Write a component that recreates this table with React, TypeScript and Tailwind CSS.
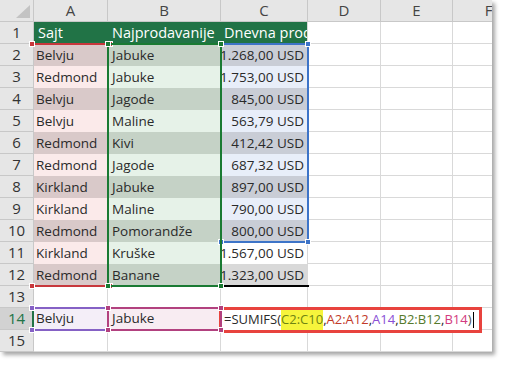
import React from "react";

const font = { fontFamily: '"Open Sans", "Noto Sans", sans-serif' };

const data = [
  ["Belvju", "Jabuke", "1.268,00 USD"],
  ["Redmond", "Jabuke", "1.753,00 USD"],
  ["Belvju", "Jagode", "845,00 USD"],
  ["Belvju", "Maline", "563,79 USD"],
  ["Redmond", "Kivi", "412,42 USD"],
  ["Redmond", "Jagode", "687,32 USD"],
  ["Kirkland", "Jabuke", "897,00 USD"],
  ["Kirkland", "Maline", "790,00 USD"],
  ["Redmond", "Pomorandže", "800,00 USD"],
  ["Kirkland", "Kruške", "1.567,00 USD"],
  ["Redmond", "Banane", "1.323,00 USD"],
];

function Handle({ pos, color }: { pos: string; color: string }) {
  return <span className={`absolute w-[6px] h-[6px] border border-white ${pos} ${color}`} />;
}

function Corners({ color }: { color: string }) {
  return (
    <>
      <Handle pos="-left-[4px] -top-[4px]" color={color} />
      <Handle pos="-right-[4px] -top-[4px]" color={color} />
      <Handle pos="-left-[4px] -bottom-[4px]" color={color} />
      <Handle pos="-right-[4px] -bottom-[4px]" color={color} />
    </>
  );
}

function cColor(i: number) {
  if (i === 9) return "bg-white";
  if (i === 10) return "bg-[#d9d9d9]";
  return i % 2 === 0 ? "bg-[#c9cdd6]" : "bg-[#e8eef9]";
}

const gridShape =
  "grid grid-cols-[34px_74px_113px_87px_73px_72px_72px] grid-rows-[repeat(16,22px)] w-[525px]";

export default function App() {
  const letters = ["A", "B", "C", "D", "E", "F"];
  const gridCell = "border-r border-b border-[#d9d9d9] bg-white";
  const rowHead = "bg-[#e6e6e6] border-r border-b border-[#c8c8c8] flex items-center justify-center text-[15px] text-[#333]";

  return (
    <div className="w-[506px] h-[368px] bg-white" style={font}>
      <div className="w-[492px] h-[352px] overflow-hidden shadow-[3px_3px_4px_rgba(0,0,0,0.35)]">
        <div className="relative w-[525px]">
          <div className={`${gridShape} text-[13.5px] text-[#2a2a2a]`}>
            {/* corner */}
            <div className="bg-[#e6e6e6] border-r border-b border-[#c8c8c8] relative">
              <svg className="absolute left-0 top-0" width="34" height="22">
                <polygon points="16,18 30,18 30,5" fill="#c3c3c3" />
              </svg>
            </div>
            {letters.map((l) => (
              <div
                key={l}
                className="bg-[#e6e6e6] border-r border-b border-[#c8c8c8] flex items-center justify-center text-[15px] text-[#444]"
              >
                {l}
              </div>
            ))}

            {/* row 1: table header */}
            <div className={rowHead}>1</div>
            <div className="bg-[#217346] text-white text-[14.5px] flex items-center pl-[4px]">Sajt</div>
            <div className="bg-[#217346] text-white text-[14.5px] flex items-center pl-[4px]">Najprodavanije</div>
            <div className="bg-[#217346] text-white text-[14.5px] flex items-center pl-[3px] overflow-hidden whitespace-nowrap border-r border-[#d9d9d9]">
              Dnevna prodaja
            </div>
            <div className={gridCell} />
            <div className={gridCell} />
            <div className={gridCell} />

            {/* data rows 2-12 */}
            {data.map((r, i) => (
              <React.Fragment key={i}>
                <div className={rowHead}>{i + 2}</div>
                <div className={`flex items-center pl-[2px] ${i % 2 === 0 ? "bg-[#d9c9c9]" : "bg-[#fbeaea]"}`}>{r[0]}</div>
                <div className={`flex items-center pl-[4px] ${i % 2 === 0 ? "bg-[#c5d2c6]" : "bg-[#e6f2e8]"}`}>{r[1]}</div>
                <div className={`flex items-center justify-end pr-[3px] border-r border-[#d9d9d9] whitespace-nowrap ${cColor(i)}`}>
                  {r[2]}
                </div>
                <div className={gridCell} />
                <div className={gridCell} />
                <div className={gridCell} />
              </React.Fragment>
            ))}

            {/* rows 13-15 */}
            {[13, 14, 15].map((n) => (
              <React.Fragment key={n}>
                <div
                  className={`border-r border-b border-[#c8c8c8] flex items-center justify-center text-[15px] ${
                    n === 14 ? "bg-[#d2d2d2] text-[#217346]" : "bg-[#e6e6e6] text-[#333]"
                  }`}
                >
                  {n}
                </div>
                {n === 14 ? (
                  <>
                    <div className="border-r border-b border-[#d9d9d9] bg-[#f4eef8] flex items-center pl-[2px]">Belvju</div>
                    <div className="border-r border-b border-[#d9d9d9] bg-[#f8ecf2] flex items-center pl-[4px]">Jabuke</div>
                  </>
                ) : (
                  <>
                    <div className={gridCell} />
                    <div className={gridCell} />
                  </>
                )}
                <div className={gridCell} />
                <div className={gridCell} />
                <div className={gridCell} />
                <div className={gridCell} />
              </React.Fragment>
            ))}
          </div>

          {/* overlay layer: range highlights and the formula being edited */}
          <div className={`absolute inset-0 pointer-events-none text-[13px] text-[#2a2a2a] ${gridShape}`}>
            <div className="col-start-2 row-start-3 row-span-11 -m-px border-y-2 border-[#c8373c] relative">
              <Corners color="bg-[#c8373c]" />
            </div>
            <div className="col-start-4 row-start-3 row-span-9 -m-px border-2 border-[#3d74c8] relative">
              <Corners color="bg-[#3d74c8]" />
            </div>
            <div className="col-start-4 row-start-13 -mx-px -mb-px border-b-2 border-black" />
            <div className="col-start-3 row-start-3 row-span-11 -m-px border-2 border-[#1a7a33] relative">
              <Corners color="bg-[#1a7a33]" />
            </div>
            <div className="col-start-2 row-start-15 -m-px border-y-2 border-r-2 border-[#8561c5] relative">
              <Corners color="bg-[#8561c5]" />
            </div>
            <div className="col-start-3 row-start-15 -m-px border-2 border-[#b2417f] relative">
              <Corners color="bg-[#b2417f]" />
            </div>
            <div className="col-start-1 row-start-15 -mt-px -mb-px justify-self-end w-[2px] bg-[#217346]" />

            <div className="col-start-4 col-span-3 row-start-15 -ml-[2px] -mr-[29px] -mt-px -mb-[3px] border-[3px] border-[#e8433e] bg-white flex items-center pl-[2px] whitespace-nowrap">
              <span>=SUMIFS(</span>
              <span className="bg-[#f6f43c] text-[#6f8412]">C2:C10</span>
              <span>,</span>
              <span className="text-[#c23a2a]">A2:A12</span>
              <span>,</span>
              <span className="text-[#8a4fd6]">A14</span>
              <span>,</span>
              <span className="text-[#557a2b]">B2:B12</span>
              <span>,</span>
              <span className="text-[#d33b80]">B14</span>
              <span className="text-[#555]">)</span>
              <span className="ml-[1px] w-px h-[16px] bg-black" />
            </div>
          </div>
        </div>
      </div>
    </div>
  );
}
